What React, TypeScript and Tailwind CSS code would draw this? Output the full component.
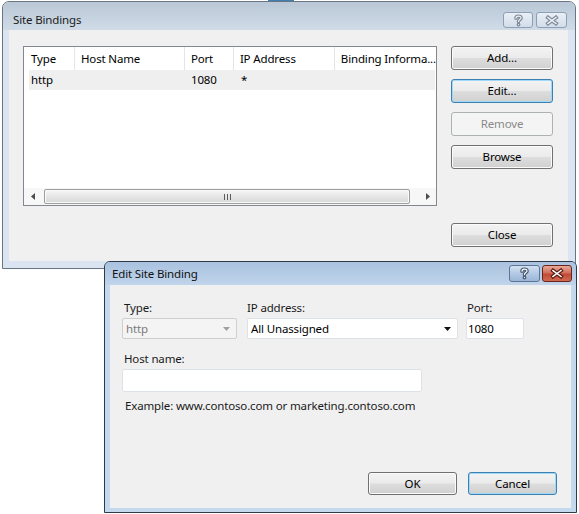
import React from "react";

const FONT = "font-['Noto_Sans',sans-serif] tracking-[-0.15px]";

function QuestionGlyph({ outline, fill }: { outline: string; fill: string }) {
  const d = "M3 4.2 C3 1.6 8 1.6 8 3.9 C8 5.6 5.5 5.6 5.5 7.6";
  return (
    <svg width="11" height="13" viewBox="0 0 11 13">
      <path d={d} fill="none" stroke={outline} strokeWidth="3.6" strokeLinecap="round" />
      <circle cx="5.5" cy="10.6" r="1.9" fill={outline} />
      <path d={d} fill="none" stroke={fill} strokeWidth="1.2" strokeLinecap="round" />
      <circle cx="5.5" cy="10.6" r="0.7" fill={fill} />
    </svg>
  );
}

function CloseGlyph({ outline, fill }: { outline: string; fill: string }) {
  const d = "M3 2.5 L11 8.5 M11 2.5 L3 8.5";
  return (
    <svg width="14" height="11" viewBox="0 0 14 11">
      <path d={d} fill="none" stroke={outline} strokeWidth="3.8" strokeLinecap="square" />
      <path d={d} fill="none" stroke={fill} strokeWidth="1.5" strokeLinecap="square" />
    </svg>
  );
}

function WinButton({
  children,
  focused,
  disabled,
  className = "",
}: {
  children: React.ReactNode;
  focused?: boolean;
  disabled?: boolean;
  className?: string;
}) {
  let look =
    "border-[#707070] bg-[linear-gradient(#f3f3f3_0%,#ebebeb_48%,#dddddd_52%,#d0d0d0_100%)] shadow-[inset_0_0_0_1px_#fbfbfb] text-black";
  if (focused)
    look =
      "border-[#3c7fb1] bg-[linear-gradient(#f3f3f3_0%,#ebebeb_48%,#dddddd_52%,#d0d0d0_100%)] shadow-[inset_0_0_0_1px_#9ed9f6] text-black";
  if (disabled) look = "border-[#adb2b5] bg-[#f4f4f4] text-[#8a8a8a]";
  return (
    <div
      className={`flex items-center justify-center rounded-[3px] border text-[11.5px] leading-none ${look} ${className}`}
    >
      {children}
    </div>
  );
}

function ArrowDown({ color }: { color: string }) {
  return (
    <svg width="7" height="4" viewBox="0 0 7 4">
      <path d="M0 0 H7 L3.5 4 Z" fill={color} />
    </svg>
  );
}

function ListView() {
  const headers = [
    { label: "Type", w: "w-[50px]", first: true },
    { label: "Host Name", w: "w-[110px]" },
    { label: "Port", w: "w-[49px]" },
    { label: "IP Address", w: "w-[101px]" },
    { label: "Binding Informa...", w: "flex-1" },
  ];
  return (
    <div className="w-[414px] h-[160px] border border-[#828790] bg-white flex flex-col">
      <div className="h-[23px] flex">
        {headers.map((h) => (
          <div
            key={h.label}
            className={`${h.w} h-full flex items-center whitespace-nowrap text-[11.5px] text-black ${
              h.first ? "pl-[7px]" : "border-l border-[#e5e5e5] pl-[6px]"
            }`}
          >
            {h.label}
          </div>
        ))}
      </div>
      <div className="h-[20px] ml-[5px] mr-[1px] bg-[#efefef] flex items-center text-[11.5px] text-black">
        <div className="w-[45px] pl-[2px]">http</div>
        <div className="w-[110px]" />
        <div className="w-[49px] pl-[7px]">1080</div>
        <div className="w-[101px] pl-[8px]">*</div>
      </div>
      <div className="flex-1" />
      <div className="h-[17px] flex bg-[#f7f7f7]">
        <div className="w-[17px] flex items-center justify-center">
          <svg width="4" height="7" viewBox="0 0 4 7">
            <path d="M4 0 V7 L0 3.5 Z" fill="#4d4d4d" />
          </svg>
        </div>
        <div className="ml-[3px] my-[1px] w-[366px] rounded-[2px] border border-[#9d9d9d] bg-[linear-gradient(#f6f6f6,#e6e6e6_50%,#d6d6d6)] shadow-[inset_0_0_0_1px_#fafafa] flex items-center justify-center gap-[2px]">
          <div className="w-px h-[6px] bg-[#5c5c5c]" />
          <div className="w-px h-[6px] bg-[#5c5c5c]" />
          <div className="w-px h-[6px] bg-[#5c5c5c]" />
        </div>
        <div className="flex-1" />
        <div className="w-[17px] flex items-center justify-center">
          <svg width="4" height="7" viewBox="0 0 4 7">
            <path d="M0 0 V7 L4 3.5 Z" fill="#4d4d4d" />
          </svg>
        </div>
      </div>
    </div>
  );
}

function SiteBindings() {
  return (
    <div className="absolute left-[2px] top-[1px] w-[574px] h-[268px] flex flex-col rounded-t-[7px] border border-[#6a7583] bg-[#dae5f1] overflow-hidden">
      <div className="h-[28px] flex items-start justify-between pl-[10px] pr-[8px] bg-[linear-gradient(#b9c7d6,#d0dbe7)]">
        <span className="pt-[10px] text-[11.5px] leading-[16px] text-[#1b1b1b]">Site Bindings</span>
        <div className="mt-[10px] flex gap-[3px]">
          <div className="w-[30px] h-[16px] rounded-[3px] border border-[#8f9fb3] bg-[linear-gradient(#e9eff6,#d2dde9)] flex items-center justify-center">
            <QuestionGlyph outline="#7d8899" fill="#eef2f7" />
          </div>
          <div className="w-[31px] h-[16px] rounded-[3px] border border-[#8f9fb3] bg-[linear-gradient(#e9eff6,#d2dde9)] flex items-center justify-center">
            <CloseGlyph outline="#7d8899" fill="#eef2f7" />
          </div>
        </div>
      </div>
      <div className="ml-[6px] mr-[7px] h-[231px] bg-[#f0f0f0] flex pt-[16px] pl-[14px]">
        <ListView />
        <div className="ml-[14px] w-[102px] flex flex-col gap-[9px]">
          <WinButton className="h-[24px]">Add...</WinButton>
          <WinButton className="h-[24px]" focused>
            Edit...
          </WinButton>
          <WinButton className="h-[24px]" disabled>
            Remove
          </WinButton>
          <WinButton className="h-[24px]">Browse</WinButton>
          <WinButton className="h-[24px] mt-[45px]">Close</WinButton>
        </div>
      </div>
    </div>
  );
}

function EditSiteBinding() {
  return (
    <div className="absolute left-[104px] top-[261px] w-[473px] h-[252px] flex flex-col rounded-t-[6px] border border-[#2f3a47] bg-[#c4d8ee] overflow-hidden">
      <div className="h-[23px] flex items-start justify-between pl-[7px] pr-[4px] bg-[linear-gradient(#a9c2df,#c0d4eb)]">
        <span className="pt-[4px] text-[11.5px] leading-[16px] text-[#111]">Edit Site Binding</span>
        <div className="mt-[3px] flex gap-[2px]">
          <div className="w-[31px] h-[17px] rounded-[3px] border border-[#5c7594] bg-[linear-gradient(#d2e0f0,#b3c9e4_50%,#9cb6d7)] flex items-center justify-center">
            <QuestionGlyph outline="#485a73" fill="#ffffff" />
          </div>
          <div className="w-[30px] h-[17px] rounded-[3px] border border-[#6a2419] bg-[linear-gradient(#e9a898,#d2705d_45%,#c24a35_55%,#cf6a52)] flex items-center justify-center">
            <CloseGlyph outline="#5a1c13" fill="#ffffff" />
          </div>
        </div>
      </div>
      <div className="mx-[5px] h-[223px] bg-[#f0f0f0] flex flex-col pt-[15px] pl-[12px] pr-[14px] pb-[13px] text-[11.5px] text-[#1a1a1a]">
        <div className="flex">
          <div className="w-[115px] flex flex-col">
            <span className="pl-[2px] leading-[16px]">Type:</span>
            <div className="mt-[2px] h-[21px] rounded-[2px] border border-[#cfcfcf] bg-[#f4f4f4] flex items-center justify-between pl-[3px] pr-[6px] text-[#7a7a7a]">
              <span>http</span>
              <ArrowDown color="#a0a0a0" />
            </div>
          </div>
          <div className="ml-[10px] w-[211px] flex flex-col">
            <span className="leading-[16px]">IP address:</span>
            <div className="mt-[2px] h-[21px] rounded-[2px] border border-[#dde2e8] bg-white flex items-center justify-between pl-[3px] pr-[6px] text-black">
              <span>All Unassigned</span>
              <ArrowDown color="#111111" />
            </div>
          </div>
          <div className="ml-[8px] w-[58px] flex flex-col">
            <span className="pl-[1px] leading-[16px]">Port:</span>
            <div className="mt-[2px] h-[21px] rounded-[2px] border border-[#dde2e8] bg-white flex items-center pl-[1px] text-black">
              1080
            </div>
          </div>
        </div>
        <span className="mt-[12px] pl-[2px] leading-[16px]">Host name:</span>
        <div className="mt-[2px] w-[300px] h-[23px] rounded-[2px] border border-[#dde2e8] bg-white" />
        <span className="mt-[6px] pl-[3px] leading-[16px]">Example: www.contoso.com or marketing.contoso.com</span>
        <div className="mt-auto flex justify-end gap-[11px]">
          <WinButton className="w-[89px] h-[23px]">OK</WinButton>
          <WinButton className="w-[89px] h-[23px]" focused>
            Cancel
          </WinButton>
        </div>
      </div>
    </div>
  );
}

export default function App() {
  return (
    <div className={`relative w-[579px] h-[514px] overflow-hidden bg-white ${FONT}`}>
      {/* bits of the window behind */}
      <div className="absolute left-[268px] top-[-10px] w-[26px] h-[13px] bg-[#3f7fae]" />
      <SiteBindings />
      <EditSiteBinding />
    </div>
  );
}
